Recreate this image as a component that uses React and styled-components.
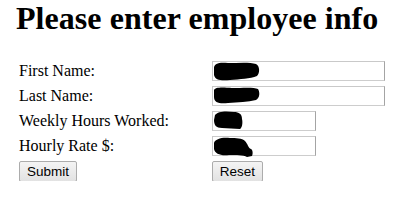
import React from "react";
import styled, { createGlobalStyle } from "styled-components";

const Global = createGlobalStyle`
  html, body { margin: 0; padding: 0; background: #fff; }
  body { font-family: "Liberation Serif", "Times New Roman", serif; color: #000; }
`;

const Page = styled.div`
  padding: 0 16px;
`;

const Title = styled.h1`
  margin: 0 0 21px 0;
  font-family: "Liberation Serif", "Times New Roman", serif;
  font-size: 32px;
  font-weight: bold;
  line-height: 37px;
  letter-spacing: 0.05px;
`;

const Form = styled.form`
  display: grid;
  grid-template-columns: 193px auto;
  grid-auto-rows: 20px;
  row-gap: 5px;
  padding: 3px 0 0 3px;
  align-items: center;
`;

const Label = styled.label`
  font-size: 16px;
  line-height: 20px;
  white-space: nowrap;
`;

const Field = styled.div`
  position: relative;
  width: ${(p) => p.$w}px;
  height: 20px;
`;

const Input = styled.input`
  box-sizing: border-box;
  width: 100%;
  height: 20px;
  margin: 0;
  padding: 0 3px;
  border: 1px solid #c9c9c9;
  border-right-color: #a4a4a4;
  border-bottom-color: #cdcdcd;
  background: #fff;
  font-family: "Liberation Sans", Arial, sans-serif;
  font-size: 13px;
  outline: none;
`;

const Scribble = styled.svg`
  position: absolute;
  left: 0;
  top: 0;
  pointer-events: none;
`;

const Button = styled.button`
  box-sizing: border-box;
  width: ${(p) => p.$w}px;
  height: 21px;
  margin: 1px 0 0 0;
  padding: 0;
  border: 1px solid #acacac;
  border-radius: 2px;
  background: linear-gradient(#f4f4f4, #e2e2e2);
  font-family: "Liberation Sans", Arial, sans-serif;
  font-size: 13.5px;
  color: #000;
  line-height: 18px;
`;

const blobs = {
  first: "M2 7 C2 2 8 1 16 2 C26 2 38 1 44 3 C48 5 48 12 45 15 C38 18 28 18 18 19 C9 20 3 19 2 14 Z",
  last: "M2 4 C3 1 10 1 20 2 C30 2 42 1 46 3 C48 6 48 12 44 14 C36 16 26 16 16 17 C8 18 2 17 2 11 Z",
  hours: "M3 4 C6 0 14 0 22 1 C27 1 30 3 30 8 C31 12 30 17 28 18 C22 18 16 17 10 17 C4 17 2 14 2 9 Z",
  rate: "M2 7 C3 3 10 1 18 2 C24 2 30 2 33 5 C36 8 36 12 39 13 C41 14 41 18 40 20 L35 21 C31 19 25 19 17 19 C9 20 3 18 2 13 Z",
};

function Blob({ d }) {
  return (
    <Scribble width="50" height="22" viewBox="0 0 50 22">
      <path d={d} fill="#000" />
    </Scribble>
  );
}

export default function App() {
  return (
    <Page>
      <Global />
      <Title>Please enter employee info</Title>
      <Form onSubmit={(e) => e.preventDefault()}>
        <Label>First Name:</Label>
        <Field $w={173}>
          <Input type="text" />
          <Blob d={blobs.first} />
        </Field>
        <Label>Last Name:</Label>
        <Field $w={173}>
          <Input type="text" />
          <Blob d={blobs.last} />
        </Field>
        <Label>Weekly Hours Worked:</Label>
        <Field $w={104}>
          <Input type="text" />
          <Blob d={blobs.hours} />
        </Field>
        <Label>Hourly Rate $:</Label>
        <Field $w={104}>
          <Input type="text" />
          <Blob d={blobs.rate} />
        </Field>
        <div>
          <Button type="submit" $w={58}>Submit</Button>
        </div>
        <div>
          <Button type="reset" $w={51}>Reset</Button>
        </div>
      </Form>
    </Page>
  );
}
